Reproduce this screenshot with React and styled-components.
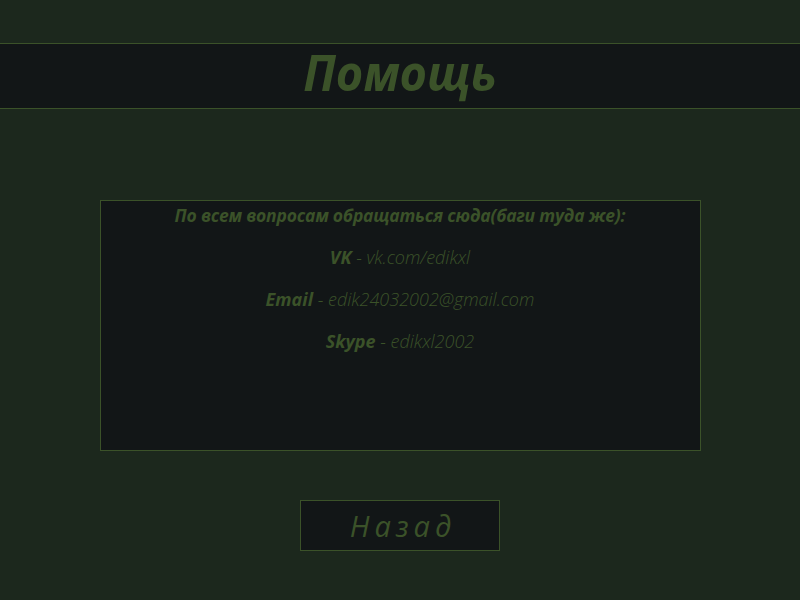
import React from 'react';
import styled, { createGlobalStyle } from 'styled-components';

const GlobalStyle = createGlobalStyle`
  html, body {
    margin: 0;
    padding: 0;
    background: #1c281d;
    font-family: 'Open Sans', 'Noto Sans', sans-serif;
  }
`;

const green = '#3b5229';

const Page = styled.div`
  width: 800px;
  height: 600px;
  display: flex;
  flex-direction: column;
  align-items: center;
  padding-top: 43px;
  box-sizing: border-box;
`;

const Header = styled.header`
  width: 100%;
  height: 66px;
  box-sizing: border-box;
  background: #121617;
  border-top: 1px solid ${green};
  border-bottom: 1px solid ${green};
  display: flex;
  align-items: center;
  justify-content: center;
`;

const Title = styled.h1`
  margin: 0;
  color: ${green};
  font-family: 'Open Sans', sans-serif;
  font-style: italic;
  font-weight: 700;
  font-size: 50px;
  letter-spacing: 0;
  transform: scaleX(0.94);
  line-height: 1;
  padding-bottom: 8px;
`;

const InfoBox = styled.section`
  margin-top: 91px;
  width: 601px;
  height: 251px;
  box-sizing: border-box;
  background: #121617;
  border: 1px solid ${green};
  display: flex;
  flex-direction: column;
  align-items: center;
  padding-top: 3px;
  gap: 20px;
`;

const Line = styled.p`
  margin: 0;
  height: 22px;
  line-height: 22px;
  font-size: ${p => (p.$bold ? '17.5px' : '18px')};
  font-style: italic;
  color: ${green};
  font-weight: ${p => (p.$bold ? 700 : 300)};
  letter-spacing: ${p => (p.$bold ? '-0.2px' : '0')};
`;

const Label = styled.b`
  font-weight: 700;
`;

const Value = styled.span`
  font-weight: 300;
`;

const BackButton = styled.button`
  margin-top: 49px;
  width: 200px;
  height: 51px;
  box-sizing: border-box;
  background: #121617;
  border: 1px solid ${green};
  color: ${green};
  font-family: 'Open Sans', sans-serif;
  font-style: italic;
  font-weight: 400;
  font-size: 29px;
  letter-spacing: 5px;
  padding: 0 0 0 6px;
  cursor: pointer;
`;

const contacts = [
  { label: 'VK', value: 'vk.com/edikxl' },
  { label: 'Email', value: 'edik24032002@gmail.com' },
  { label: 'Skype', value: 'edikxl2002' },
];

export default function App() {
  return (
    <Page>
      <GlobalStyle />
      <Header>
        <Title>Помощь</Title>
      </Header>
      <InfoBox>
        <Line $bold>По всем вопросам обращаться сюда(баги туда же):</Line>
        {contacts.map(c => (
          <Line key={c.label}>
            <Label>{c.label}</Label> <Value>- {c.value}</Value>
          </Line>
        ))}
      </InfoBox>
      <BackButton>Назад</BackButton>
    </Page>
  );
}
